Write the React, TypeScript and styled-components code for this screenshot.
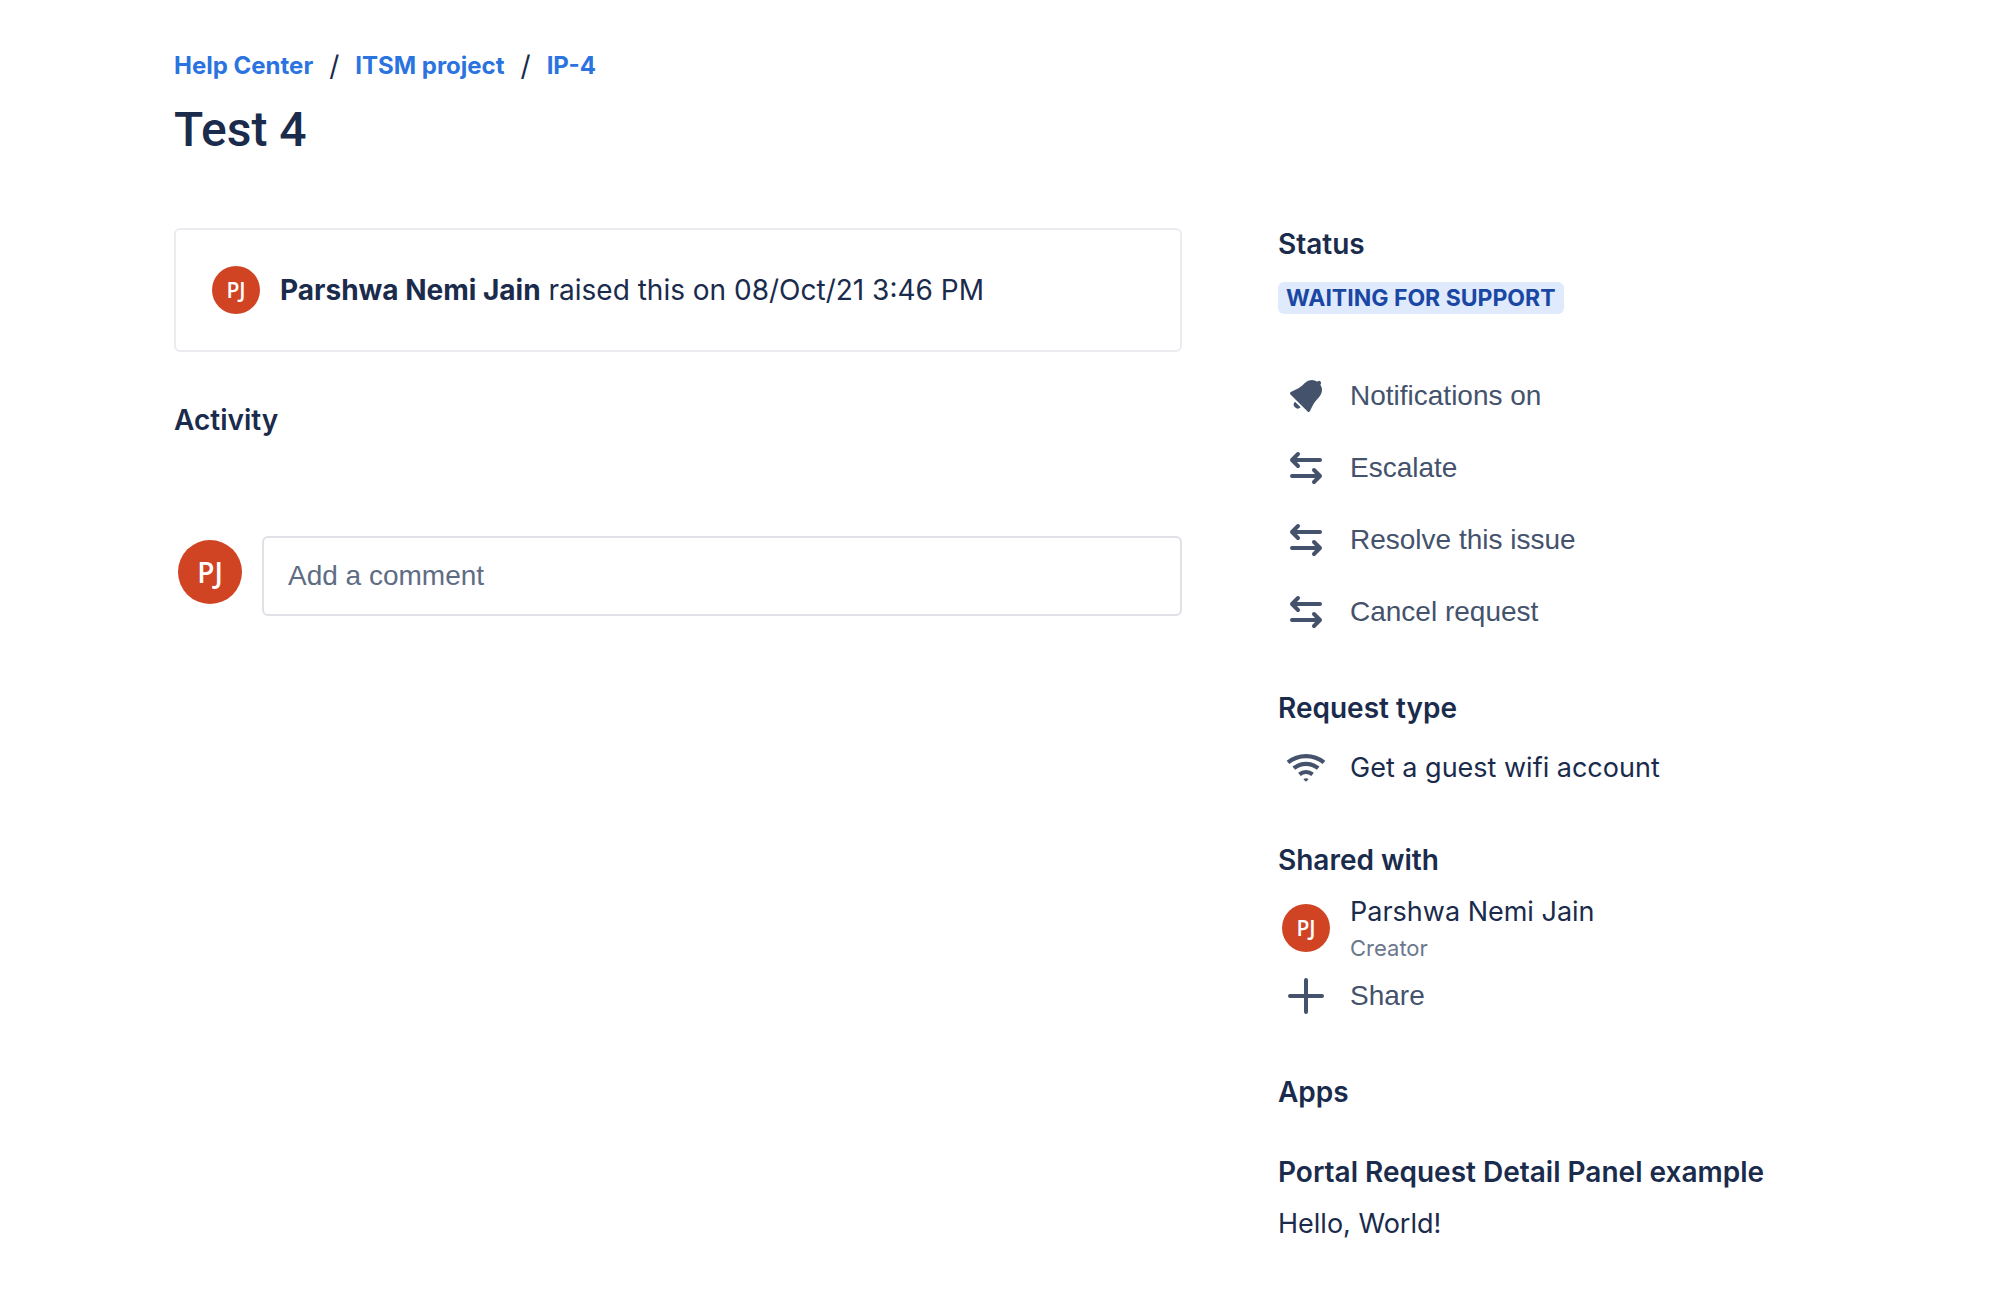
import React from 'react';
import styled, { createGlobalStyle } from 'styled-components';

const GlobalStyle = createGlobalStyle`
  *, *::before, *::after { box-sizing: border-box; }
  body {
    margin: 0;
    background: #ffffff;
    color: #1a2b4c;
    font-family: Inter, Roboto, sans-serif;
    font-size: 28px;
    line-height: 32px;
  }
`;

const controlFont = `'Liberation Sans', Arial, sans-serif`;

const Page = styled.div`
  max-width: 1698px;
  margin: 0 auto;
  padding: 50px 24px 72px;
`;

const Breadcrumbs = styled.nav`
  ol {
    display: flex;
    flex-wrap: wrap;
    align-items: center;
    margin: 0;
    padding: 0;
    list-style: none;
  }
  li {
    display: flex;
    align-items: center;
  }
  li + li::before {
    content: '/';
    margin: 0 16px;
    font-size: 28px;
  }
`;

const Crumb = styled.a`
  color: #2b73df;
  font-size: 24px;
  font-weight: 700;
  text-decoration: none;
  &:hover { text-decoration: underline; }
`;

const Title = styled.h1`
  margin: 20px 0 70px;
  font-family: Roboto, Inter, sans-serif;
  font-size: 48px;
  font-weight: 500;
  line-height: 56px;
`;

const Columns = styled.div`
  display: grid;
  grid-template-columns: minmax(0, 1fr) minmax(0, 546px);
  column-gap: 96px;
  align-items: start;
`;

const Card = styled.section`
  display: flex;
  align-items: center;
  gap: 20px;
  padding: 36px;
  border: 2px solid #ebecf0;
  border-radius: 6px;
`;

const Raised = styled.p`
  margin: 0;
`;

const Name = styled.strong`
  font-weight: 700;
`;

const Avatar = styled.span<{ $large?: boolean }>`
  display: flex;
  flex: none;
  align-items: center;
  justify-content: center;
  width: ${(p) => (p.$large ? 64 : 48)}px;
  height: ${(p) => (p.$large ? 64 : 48)}px;
  border-radius: 50%;
  background: #d04424;
  color: #ffffff;
  font-family: 'Open Sans', 'Noto Sans', sans-serif;
  font-size: ${(p) => (p.$large ? 28 : 21)}px;
  font-weight: 600;
`;

const Heading = styled.h2`
  margin: 0;
  font-size: 28px;
  font-weight: 600;
`;

const Activity = styled.section`
  display: grid;
  gap: 100px;
  margin-top: 52px;
`;

const CommentForm = styled.form`
  display: flex;
  align-items: flex-start;
  gap: 16px;
`;

const AvatarSlot = styled.div`
  padding: 4px;
`;

const CommentInput = styled.input`
  flex: 1;
  min-width: 0;
  height: 80px;
  padding: 0 24px;
  border: 2px solid #dfe1e6;
  border-radius: 6px;
  background: #ffffff;
  color: #1a2b4c;
  font: 28px ${controlFont};
  &::placeholder { color: #5e6c84; opacity: 1; }
`;

const Section = styled.section<{ $top?: number; $gap?: number }>`
  display: flex;
  flex-direction: column;
  align-items: flex-start;
  gap: ${(p) => p.$gap ?? 20}px;
  margin-top: ${(p) => p.$top ?? 0}px;
`;

const Lozenge = styled.span`
  padding: 0 8px;
  border-radius: 6px;
  background: #dfeafd;
  color: #1a47a3;
  font-size: 23px;
  font-weight: 700;
  text-transform: uppercase;
`;

const Actions = styled.ul`
  margin: 46px 0 0;
  padding: 0;
  list-style: none;
`;

const ActionButton = styled.button`
  display: flex;
  align-items: center;
  gap: 20px;
  height: 72px;
  padding: 0 4px;
  border: 0;
  background: none;
  color: #44526c;
  font: 28px ${controlFont};
  cursor: pointer;
`;

const Row = styled.div`
  display: flex;
  align-items: center;
  gap: 20px;
  min-height: 48px;
  padding: 0 4px;
  font-size: 27px;
`;

const Person = styled.div`
  display: grid;
  gap: 8px;
`;

const Role = styled.span`
  color: #6b778c;
  font-size: 22px;
  line-height: 24px;
`;

const Text = styled.p`
  margin: 0;
  font-size: 27px;
`;

const Icon = styled.svg.attrs({ viewBox: '0 0 24 24', 'aria-hidden': true })`
  flex: none;
  width: 48px;
  height: 48px;
  color: #44526c;
`;

const BellIcon = () => (
  <Icon fill="currentColor">
    <path d="M6.485 17.669a2 2 0 002.829 0l-2.829-2.83a2 2 0 000 2.83zm4.897-12.191l-.725.725c-.782.782-2.21 1.813-3.206 2.311l-3.017 1.509c-.495.248-.584.774-.187 1.171l8.556 8.556c.398.396.922.313 1.171-.188l1.51-3.016c.494-.988 1.526-2.42 2.311-3.206l.725-.726a5.048 5.048 0 00.64-6.356 1.01 1.01 0 10-1.354-1.494c-.023.025-.046.049-.066.075a5.043 5.043 0 00-2.788-.84 5.036 5.036 0 00-3.57 1.478z" />
  </Icon>
);

const TransitionIcon = () => (
  <Icon fill="none" stroke="currentColor" strokeWidth="2" strokeLinecap="round" strokeLinejoin="round">
    <path d="M19 8H5M8 5 5 8l3 3M5 16h14M16 13l3 3-3 3" />
  </Icon>
);

const WifiIcon = () => (
  <Icon fill="none" stroke="currentColor" strokeWidth="2.1">
    <path d="M3 9.2a14.4 14.4 0 0 1 18 0M5.9 12.1a9.8 9.8 0 0 1 12.2 0M8.7 15.2a5.4 5.4 0 0 1 6.6 0" />
    <path d="M10.7 17.6q1.3-1 2.6 0L12 18.9z" fill="currentColor" stroke="none" />
  </Icon>
);

const PlusIcon = () => (
  <Icon fill="none" stroke="currentColor" strokeWidth="2" strokeLinecap="round">
    <path d="M12 4v16M4 12h16" />
  </Icon>
);

const crumbs = ['Help Center', 'ITSM project', 'IP-4'];
const transitions = ['Escalate', 'Resolve this issue', 'Cancel request'];

export default function App() {
  return (
    <Page>
      <GlobalStyle />
      <header>
        <Breadcrumbs aria-label="Breadcrumbs">
          <ol>
            {crumbs.map((crumb) => (
              <li key={crumb}><Crumb href="#">{crumb}</Crumb></li>
            ))}
          </ol>
        </Breadcrumbs>
        <Title>Test 4</Title>
      </header>
      <Columns>
        <main>
          <Card>
            <Avatar>PJ</Avatar>
            <Raised><Name>Parshwa Nemi Jain</Name> raised this on 08/Oct/21 3:46 PM</Raised>
          </Card>
          <Activity>
            <Heading>Activity</Heading>
            <CommentForm onSubmit={(e) => e.preventDefault()}>
              <AvatarSlot><Avatar $large>PJ</Avatar></AvatarSlot>
              <CommentInput type="text" aria-label="Add a comment" placeholder="Add a comment" />
            </CommentForm>
          </Activity>
        </main>
        <aside>
          <Section $gap={22}>
            <Heading>Status</Heading>
            <Lozenge>Waiting for support</Lozenge>
          </Section>
          <Actions>
            <li><ActionButton type="button"><BellIcon />Notifications on</ActionButton></li>
            {transitions.map((label) => (
              <li key={label}><ActionButton type="button"><TransitionIcon />{label}</ActionButton></li>
            ))}
          </Actions>
          <Section $top={44}>
            <Heading>Request type</Heading>
            <Row><WifiIcon />Get a guest wifi account</Row>
          </Section>
          <Section $top={52}>
            <Heading>Shared with</Heading>
            <div>
              <Row>
                <Avatar>PJ</Avatar>
                <Person>
                  <span>Parshwa Nemi Jain</span>
                  <Role>Creator</Role>
                </Person>
              </Row>
              <ActionButton type="button"><PlusIcon />Share</ActionButton>
            </div>
          </Section>
          <Section $top={44} $gap={48}>
            <Heading>Apps</Heading>
            <Section>
              <Heading as="h3">Portal Request Detail Panel example</Heading>
              <Text>Hello, World!</Text>
            </Section>
          </Section>
        </aside>
      </Columns>
    </Page>
  );
}
